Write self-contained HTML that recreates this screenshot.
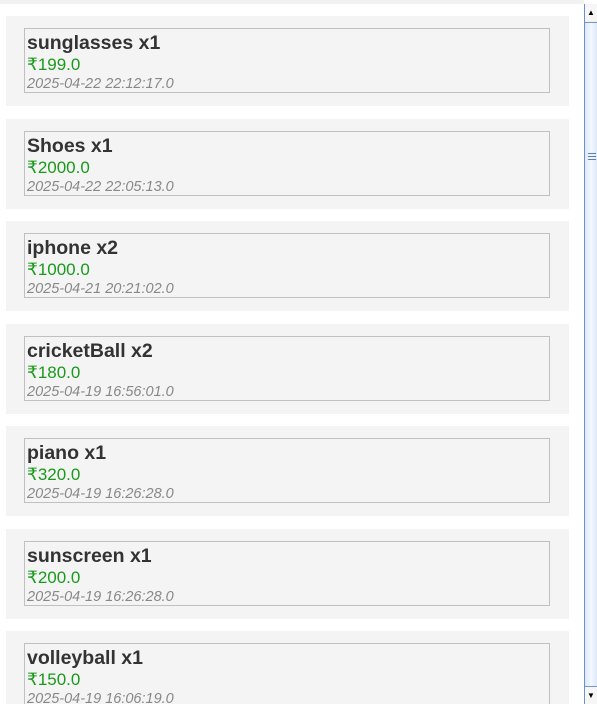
<!DOCTYPE html>
<html><head><meta charset="utf-8"><style>
html,body{margin:0;width:597px;height:704px;overflow:hidden}
body{background:#fff;font-family:"Liberation Sans",Arial,sans-serif;position:relative}
.top{position:absolute;left:0;top:0;width:584px;height:4px;background:#f2f2f2}
.card{position:absolute;left:6px;width:563px;height:90px;background:#f4f4f4}
.in{position:absolute;left:18px;top:12px;width:526px;height:65px;border:1px solid #c0c0c0;box-sizing:border-box}
.t{position:absolute;left:2px;top:3px;font-weight:bold;font-size:19.5px;color:#333;white-space:nowrap}
.p{position:absolute;left:2px;top:26px;font-size:17px;color:#1a9a1a}
.d{position:absolute;left:2px;top:47px;font-size:14.5px;font-style:italic;color:#888;white-space:nowrap}
.sb{position:absolute;left:584px;top:4px;width:13px;height:700px;background:#f0f0f0;border-left:1px solid #6f8fc8;box-sizing:border-box}
.th{position:absolute;left:585px;top:22px;width:12px;height:665px;background:linear-gradient(90deg,#dce8f8,#f4f8ff 50%,#dce8f8);border-top:1px solid #7a98d0;border-bottom:1px solid #7a98d0;box-sizing:border-box}
.grip{position:absolute;left:3px;width:8px;height:1px;background:#5b7cc0}
.ar{position:absolute;left:585px;width:12px;height:17px;background:#f6f6f6;font-size:8px;text-align:center;line-height:17px;color:#000}
</style></head><body>
<div class="top"></div>
<div class="card" style="top:16px"><div class="in"><div class="t">sunglasses x1</div><div class="p">₹199.0</div><div class="d">2025-04-22 22:12:17.0</div></div></div>
<div class="card" style="top:118.5px"><div class="in"><div class="t">Shoes x1</div><div class="p">₹2000.0</div><div class="d">2025-04-22 22:05:13.0</div></div></div>
<div class="card" style="top:221px"><div class="in"><div class="t">iphone x2</div><div class="p">₹1000.0</div><div class="d">2025-04-21 20:21:02.0</div></div></div>
<div class="card" style="top:323.5px"><div class="in"><div class="t">cricketBall x2</div><div class="p">₹180.0</div><div class="d">2025-04-19 16:56:01.0</div></div></div>
<div class="card" style="top:426px"><div class="in"><div class="t">piano x1</div><div class="p">₹320.0</div><div class="d">2025-04-19 16:26:28.0</div></div></div>
<div class="card" style="top:528.5px"><div class="in"><div class="t">sunscreen x1</div><div class="p">₹200.0</div><div class="d">2025-04-19 16:26:28.0</div></div></div>
<div class="card" style="top:631px"><div class="in"><div class="t">volleyball x1</div><div class="p">₹150.0</div><div class="d">2025-04-19 16:06:19.0</div></div></div>
<div class="sb"></div>
<div class="ar" style="top:4px">▲</div>
<div class="th"><div class="grip" style="top:130px"></div><div class="grip" style="top:133px"></div><div class="grip" style="top:136px"></div></div>
<div class="ar" style="top:687px">▼</div>
</body></html>
